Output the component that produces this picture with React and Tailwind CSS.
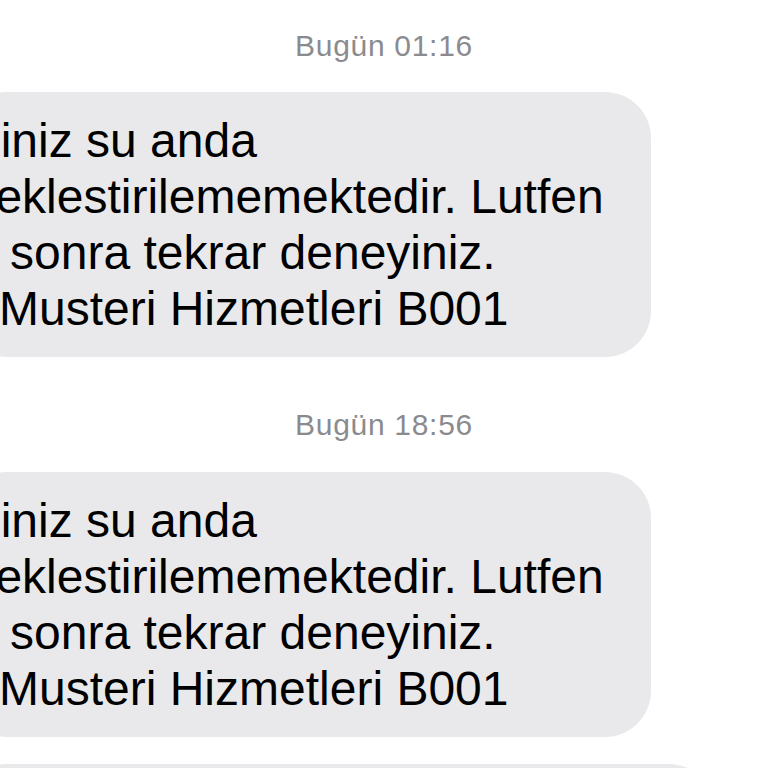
import React from 'react';

const messages = [
  { time: 'Bugün 01:16' },
  { time: 'Bugün 18:56' },
];

const Bubble = () => (
  <div className="-ml-[40px] w-[691px] rounded-[46px] bg-[#e9e9eb] pl-[40px] pt-[21px] pb-[20px] text-[48px] leading-[56px] text-black">
    {/* left part of every line runs off the screen */}
    <div className="ml-[-114px] whitespace-pre">Isleminiz su anda</div>
    <div className="ml-[-98px] whitespace-pre">gerceklestirilememektedir. Lutfen</div>
    <div className="ml-[-110px] whitespace-pre">daha sonra tekrar deneyiniz.</div>
    <div className="ml-[-1px] whitespace-pre">Musteri Hizmetleri B001</div>
  </div>
);

const App = () => {
  return (
    <div className="h-[768px] w-[768px] overflow-hidden bg-white font-['Liberation_Sans',Arial,sans-serif]">
      {messages.map((msg, i) => (
        <div key={msg.time} className={i === 0 ? 'pt-[28px]' : 'pt-[50px]'}>
          <div className="flex justify-center text-[30px] leading-[36px] tracking-[0.7px] text-[#8b8b8f]">
            {msg.time}
          </div>
          <div className={i === 0 ? 'mt-[28px]' : 'mt-[29px]'}>
            <Bubble />
          </div>
        </div>
      ))}
      {/* next message, cut off by the bottom edge */}
      <div className="mt-[27px] -ml-[40px] h-[100px] w-[755px] rounded-[46px] bg-[#e9e9eb]" />
    </div>
  );
};

export default App;
